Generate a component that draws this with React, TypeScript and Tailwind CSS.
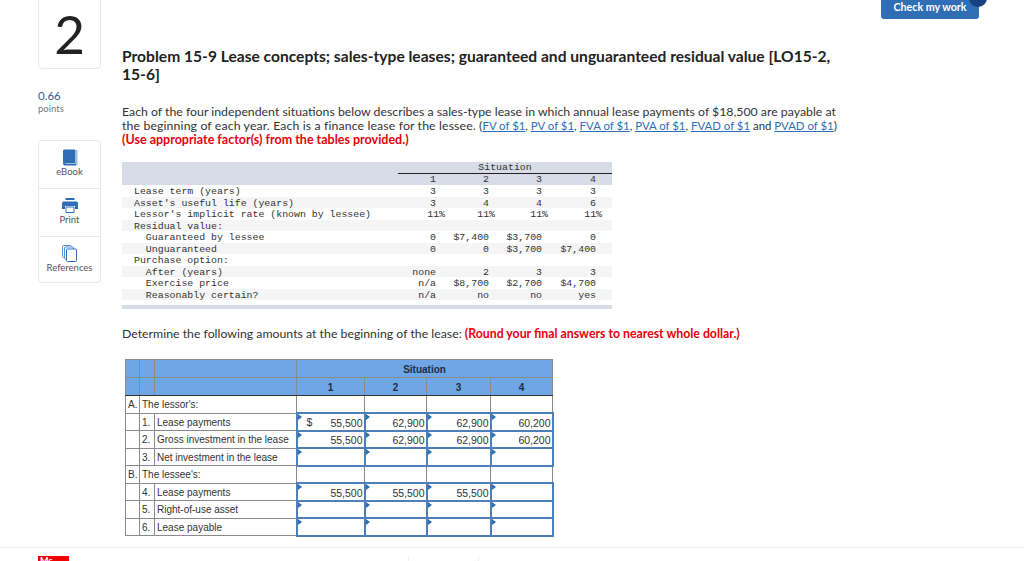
import React from 'react'

const sans = "font-['Lato','Open_Sans',sans-serif]"

const situationRows: [string, string, string, string, string, boolean][] = [
  ['Lease term (years)', '3', '3', '3', '3', false],
  ["Asset's useful life (years)", '3', '4', '4', '6', true],
  ["Lessor's implicit rate (known by lessee)", '11%', '11%', '11%', '11%', false],
  ['Residual value:', '', '', '', '', true],
  ['  Guaranteed by lessee', '0', '$7,400', '$3,700', '0', false],
  ['  Unguaranteed', '0', '0', '$3,700', '$7,400', true],
  ['Purchase option:', '', '', '', '', false],
  ['  After (years)', 'none', '2', '3', '3', true],
  ['  Exercise price', 'n/a', '$8,700', '$2,700', '$4,700', false],
  ['  Reasonably certain?', 'n/a', 'no', 'no', 'yes', true],
]

const answerRows = [
  { kind: 'head', letter: 'A.', label: "The lessor's:" },
  { kind: 'row', num: '1.', label: 'Lease payments', dollar: true, values: ['55,500', '62,900', '62,900', '60,200'] },
  { kind: 'row', num: '2.', label: 'Gross investment in the lease', values: ['55,500', '62,900', '62,900', '60,200'] },
  { kind: 'row', num: '3.', label: 'Net investment in the lease', values: ['', '', '', ''] },
  { kind: 'head', letter: 'B.', label: "The lessee's:" },
  { kind: 'row', num: '4.', label: 'Lease payments', values: ['55,500', '55,500', '55,500', ''] },
  { kind: 'row', num: '5.', label: 'Right-of-use asset', values: ['', '', '', ''] },
  { kind: 'row', num: '6.', label: 'Lease payable', values: ['', '', '', ''] },
]

const links = ['FV of $1', 'PV of $1', 'FVA of $1', 'PVA of $1', 'FVAD of $1', 'PVAD of $1']

function BookIcon() {
  return (
    <svg width="16" height="17" viewBox="0 0 16 17">
      <path d="M3 1h12.500v15H3z" fill="#9dbce3" />
      <path d="M1 2A1.500 1.500 0 0 1 2.500.5H13V13H3a2 2 0 0 0-2 1.500z" fill="#2f6db5" />
      <path d="M1 14.500A2 2 0 0 1 3 13h10v1H3.500v1H14v1.500H3a2 2 0 0 1-2-2z" fill="#2f6db5" />
    </svg>
  )
}

function PrintIcon() {
  return (
    <svg width="16" height="15" viewBox="0 0 16 15">
      <path d="M3.500 0h9v2h-9z" fill="#2f6db5" />
      <path d="M1.500 3.500h13A1.500 1.500 0 0 1 16 5v6h-3V8H3v3H0V5a1.500 1.500 0 0 1 1.500-1.500z" fill="#2f6db5" />
      <path d="M4 9h8v5.500H4z" fill="#fff" stroke="#2f6db5" />
    </svg>
  )
}

function PagesIcon() {
  return (
    <svg width="15" height="17" viewBox="0 0 15 17" fill="#fff" stroke="#5b8fd0">
      <rect x="0.500" y="0.500" width="9" height="12" rx="1" />
      <rect x="2.500" y="2" width="9" height="12" rx="1" />
      <rect x="4.500" y="4" width="10" height="12.500" rx="1" stroke="#2f6db5" />
    </svg>
  )
}

function ToolCard({ label, icon, className }: { label: string; icon: React.ReactNode; className: string }) {
  return (
    <div className={`flex flex-col items-center border-x border-t border-[#e8e8e8] pt-[8px] ${className}`}>
      <div className="flex h-[17px] items-center">{icon}</div>
      <div className="text-[9.500px] leading-[12px] text-[#555]">{label}</div>
    </div>
  )
}

function AnswerCell({ value, dollar }: { value: string; dollar?: boolean }) {
  return (
    <td className="relative border-[2px] border-[#4d7fb8] p-0 pr-[1px] pt-[2px] text-right text-[10.500px]">
      <span className="absolute left-0 top-0 h-0 w-0 border-y-[3px] border-l-[4px] border-y-transparent border-l-[#2f6db5]" />
      {dollar && <span className="absolute left-[9px] top-[2px]">$</span>}
      {value}
    </td>
  )
}

export default function App() {
  return (
    <div className={`flex h-[561px] w-[1024px] flex-col overflow-hidden bg-white ${sans}`}>
      <div className="flex h-[547px] shrink-0 pl-[38px]">
        {/* left rail */}
        <aside className="w-[63px] shrink-0">
          <div className="-mt-[2px] flex h-[71px] items-center justify-center rounded-b-[4px] border border-[#e8e8e8] text-[53px] leading-none text-[#222]">
            2
          </div>
          <div className="mt-[19px] text-[11.500px] leading-[15px] text-[#2f5f9f]">0.66</div>
          <div className="text-[9.500px] leading-[12px] text-[#777]">points</div>
          <div className="mt-[25px] flex flex-col">
            <ToolCard label="eBook" icon={<BookIcon />} className="h-[48px] rounded-t-[4px]" />
            <ToolCard label="Print" icon={<PrintIcon />} className="h-[48px]" />
            <ToolCard label="References" icon={<PagesIcon />} className="h-[47px] rounded-b-[4px] border-b" />
          </div>
        </aside>

        {/* question body */}
        <main className="ml-[21px] w-[720px] shrink-0 pt-[47px]">
          <h1 className="text-[15.600px] font-bold leading-[18px] text-[#222]">
            Problem 15-9 Lease concepts; sales-type leases; guaranteed and unguaranteed residual value [LO15-2, 15-6]
          </h1>
          <p className="mt-[22px] text-[12.300px] leading-[14px] text-[#333]">
            Each of the four independent situations below describes a sales-type lease in which annual lease payments of $18,500 are payable at{' '}
            <span className="tracking-[0.12px]">the beginning of each year. Each is a finance lease for the lessee. (</span>
            <span className="text-[11.400px]">
              {links.map((l, i) => (
                <React.Fragment key={l}>
                  <a className="text-[#2f6db5] underline">{l}</a>
                  {i < 4 ? ', ' : i === 4 ? ' and ' : ''}
                </React.Fragment>
              ))}
            </span>
            )
            <br />
            <span className="text-[12.500px] font-bold text-[#e8000b]">(Use appropriate factor(s) from the tables provided.)</span>
          </p>

          {/* situation table */}
          <div className="mt-[15px] w-[490px] font-['Liberation_Mono',monospace] text-[9.900px] leading-[13.500px] text-[#333]">
            <div className="grid h-[23px] grid-cols-[276px_38px_53px_53px_70px] grid-rows-[12px_11px] bg-[#d7dce7] text-right">
              <div className="row-span-2" />
              <div className="col-span-4 border-b border-[#222] text-center leading-[12px]">Situation</div>
              <div className="leading-[12px]">1</div>
              <div className="leading-[12px]">2</div>
              <div className="leading-[12px]">3</div>
              <div className="pr-[16px] leading-[12px]">4</div>
            </div>
            {situationRows.map(([label, a, b, c, d, shaded]) => (
              <div key={label} className={`grid h-[11.500px] grid-cols-[276px_38px_53px_53px_70px] text-right ${shaded ? 'bg-[#f5f5f5]' : ''}`}>
                <div className="whitespace-pre pl-[12px] text-left">{label}</div>
                <div className={a.endsWith('%') ? '-mr-[9px]' : ''}>{a}</div>
                <div className={b.endsWith('%') ? '-mr-[6px]' : ''}>{b}</div>
                <div className={c.endsWith('%') ? '-mr-[6px]' : ''}>{c}</div>
                <div className={d.endsWith('%') ? 'pr-[10px]' : 'pr-[16px]'}>{d}</div>
              </div>
            ))}
            <div className="mt-[5px] h-[4px] bg-[#d7dce7]" />
          </div>

          <p className="mt-[18px] text-[12.300px] leading-[14px] text-[#333]">
            Determine the following amounts at the beginning of the lease:{' '}
            <span className="font-bold text-[#e8000b]">(Round your final answers to nearest whole dollar.)</span>
          </p>

          {/* answer table */}
          <table className="ml-[3px] mt-[18px] w-[427px] table-fixed border-collapse font-['Liberation_Sans',sans-serif] text-[10px] leading-[12px] text-[#333] [&_td]:pt-[2px] [&_th]:pt-[2px]">
            <colgroup>
              <col className="w-[14px]" />
              <col className="w-[15px]" />
              <col className="w-[142px]" />
              <col className="w-[68px]" />
              <col className="w-[62px]" />
              <col className="w-[64px]" />
              <col className="w-[62px]" />
            </colgroup>
            <thead className="bg-[#6ea6e6] text-center font-bold text-[#1f2d3d]">
              <tr className="h-[18px]">
                <th className="border border-[#8a8a8a]" />
                <th className="border border-[#8a8a8a]" />
                <th className="border border-[#8a8a8a]" />
                <th colSpan={4} className="border border-[#8a8a8a]">Situation</th>
              </tr>
              <tr className="h-[18px]">
                <th className="border border-[#8a8a8a] border-b-[#333]" />
                <th className="border border-[#8a8a8a] border-b-[#333]" />
                <th className="border border-[#8a8a8a] border-b-[#333]" />
                {['1', '2', '3', '4'].map((n) => (
                  <th key={n} className="border border-[#8a8a8a] border-b-[#333]">{n}</th>
                ))}
              </tr>
            </thead>
            <tbody>
              {answerRows.map((row) =>
                row.kind === 'head' ? (
                  <tr key={row.letter} className="h-[17.500px]">
                    <td className="border border-[#8a8a8a] pl-[2px]">{row.letter}</td>
                    <td colSpan={2} className="border border-[#8a8a8a] pl-[2px]">{row.label}</td>
                    <td className="border border-[#8a8a8a]" />
                    <td className="border border-[#8a8a8a]" />
                    <td className="border border-[#8a8a8a]" />
                    <td className="border border-[#8a8a8a]" />
                  </tr>
                ) : (
                  <tr key={row.num} className="h-[17.500px]">
                    <td className="border border-[#8a8a8a]" />
                    <td className="border border-[#8a8a8a] pl-[2px]">{row.num}</td>
                    <td className="border border-[#8a8a8a] pl-[2px]">{row.label}</td>
                    {row.values?.map((v, i) => (
                      <AnswerCell key={i} value={v} dollar={row.dollar && i === 0} />
                    ))}
                  </tr>
                ),
              )}
            </tbody>
          </table>
        </main>

        {/* check my work */}
        <div className="relative ml-[39px] h-[19px] w-[98px] rounded-b-[3px] bg-[#2f6db5] text-center text-[10.700px] font-bold leading-[14px] text-white">
          Check my work
          <span className="absolute -right-[8px] -top-[11px] h-[18px] w-[18px] rounded-full bg-[#16427f]" />
        </div>
      </div>

      {/* next / prev footer, cut off by the window */}
      <footer className="flex h-[14px] shrink-0 border-t border-[#f0f0f0] pl-[38px] pt-[8px]">
        <div className="h-[6px] w-[31px] overflow-hidden bg-[#f00000] pl-[2px] text-[9px] font-bold leading-[10px] text-white">Mc</div>
        <div className="ml-[339px] h-[6px] w-[71px] border-x border-[#f0f0f0]" />
      </footer>
    </div>
  )
}
